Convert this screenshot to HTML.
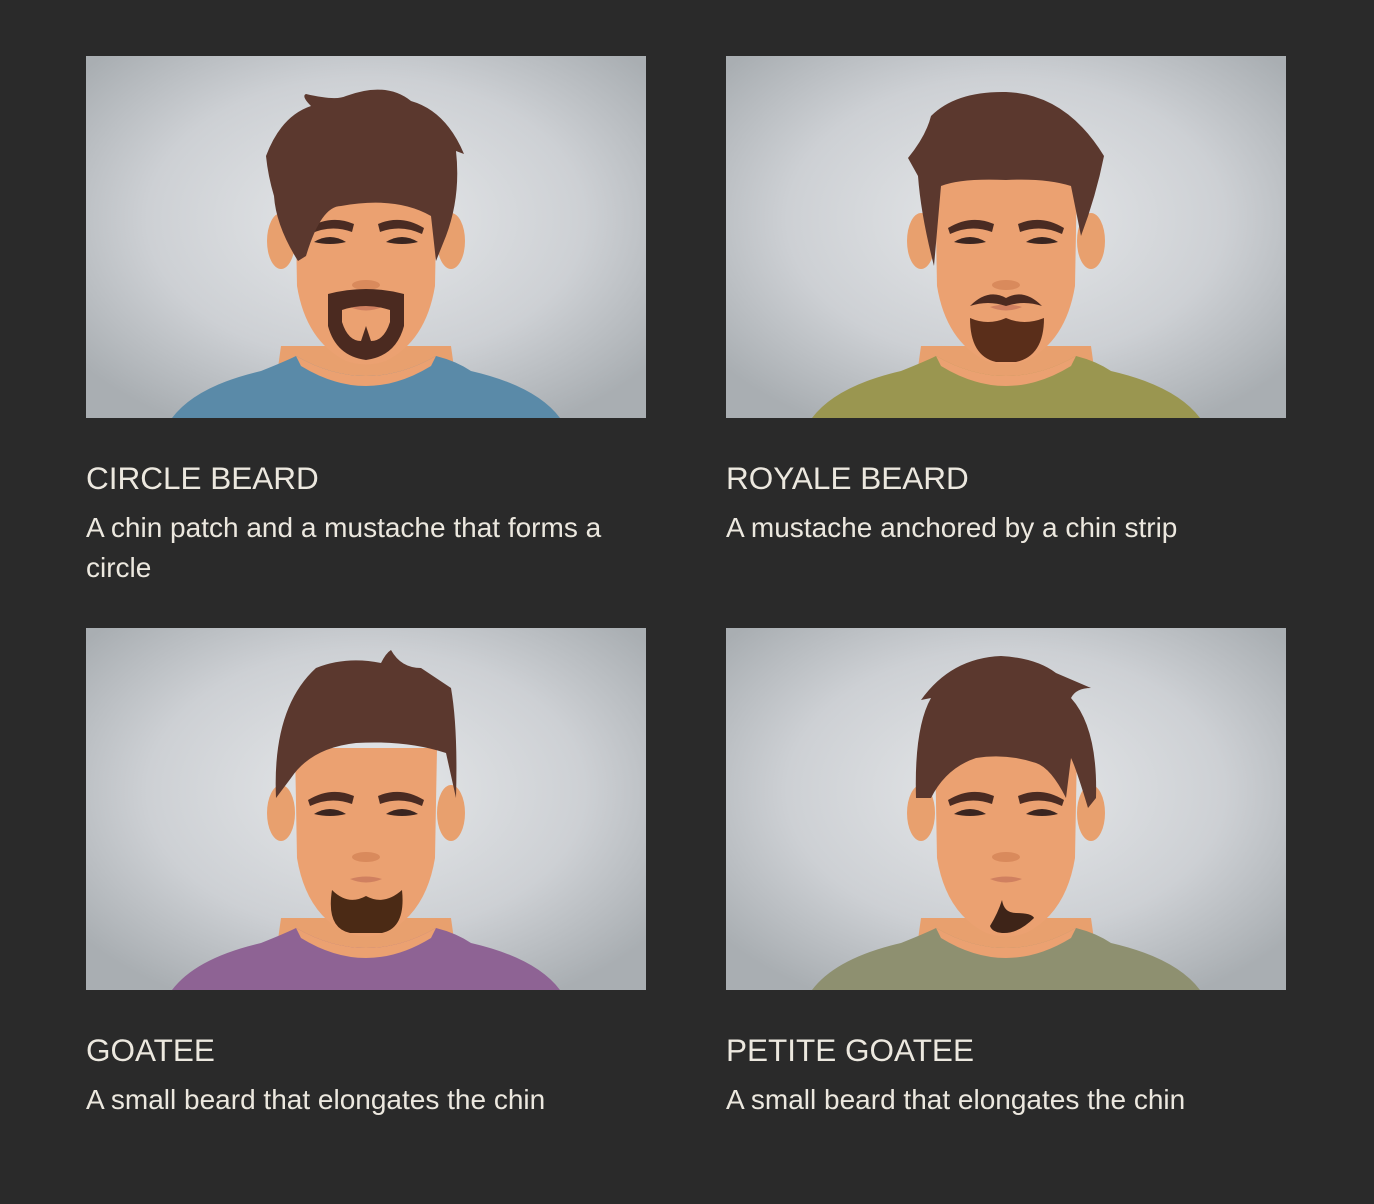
<!DOCTYPE html>
<html><head><meta charset="utf-8"><style>
body{margin:0;background:#2a2a2a;width:1374px;height:1204px;overflow:hidden;font-family:"Liberation Sans",Arial,sans-serif;color:#ece8df}
.card{position:absolute;width:560px}
.card svg{display:block;width:560px;height:362px}
h2{margin:0;position:absolute;font-weight:400;font-size:31.5px;line-height:72px;white-space:nowrap}
p{margin:0;position:absolute;font-size:28px;line-height:40px;width:560px}
</style></head><body>
<svg width="0" height="0" style="position:absolute">
<defs>
<radialGradient id="bg" cx="50%" cy="45%" r="65%"><stop offset="0" stop-color="#e6e8ea"/><stop offset="0.6" stop-color="#cdd0d4"/><stop offset="1" stop-color="#a9aeb2"/></radialGradient>
<g id="base">
<rect width="560" height="362" fill="url(#bg)"/>
<path d="M185 362 L195 290 L365 290 L375 362Z" fill="#e8a06e"/>
<ellipse cx="195" cy="185" rx="14" ry="28" fill="#e8a06e"/>
<ellipse cx="365" cy="185" rx="14" ry="28" fill="#e8a06e"/>
<path d="M209 120 L351 120 L349 230 Q340 285 300 305 Q280 312 260 305 Q220 285 211 230Z" fill="#eba171"/>
<path d="M222 172 Q245 158 268 168 L266 176 Q245 168 224 178Z" fill="#4a2b22"/>
<path d="M338 172 Q315 158 292 168 L294 176 Q315 168 336 178Z" fill="#4a2b22"/>
<path d="M228 186 Q244 176 260 186 Q244 190 228 186Z" fill="#3a2520"/>
<path d="M300 186 Q316 176 332 186 Q316 190 300 186Z" fill="#3a2520"/>
<ellipse cx="280" cy="229" rx="14" ry="5" fill="#d98a5c"/>
<path d="M264 251 Q280 246 296 251 Q280 258 264 251Z" fill="#d08060"/>
</g>
</defs></svg>

<div class="card" style="left:86px;top:56px">
<svg viewBox="0 0 560 362"><use href="#base"/>
<path d="M86 362 Q110 330 175 315 Q200 305 210 300 Q280 340 350 300 Q370 305 385 315 Q450 330 474 362Z" fill="#5a8aa8"/>
<path d="M210 300 Q280 340 350 300 L345 310 Q280 350 215 310Z" fill="#eba171"/>
<path d="M180 100 Q195 60 225 50 Q215 40 220 38 Q250 45 260 40 Q300 25 325 45 Q360 55 378 98 L370 95 Q375 140 360 180 L350 205 L345 160 Q310 140 255 150 Q235 150 220 200 L212 205 Q190 170 188 140 Q182 120 180 100Z" fill="#5b382e"/>
<path d="M242 238 Q280 228 318 238 L318 270 Q310 300 280 304 Q250 300 242 270Z M256 254 L256 266 Q262 285 275 285 L280 270 L285 285 Q298 285 304 266 L304 254 Q280 246 256 254Z" fill="#4b2a20" fill-rule="evenodd"/>
</svg>
<h2 style="left:0;top:386px">CIRCLE BEARD</h2>
<p style="top:452px">A chin patch and a mustache that forms a circle</p>
</div>

<div class="card" style="left:726px;top:56px">
<svg viewBox="0 0 560 362"><use href="#base"/>
<path d="M86 362 Q110 330 175 315 Q200 305 210 300 Q280 340 350 300 Q370 305 385 315 Q450 330 474 362Z" fill="#9a9650"/>
<path d="M210 300 Q280 340 350 300 L345 310 Q280 350 215 310Z" fill="#eba171"/>
<path d="M182 102 Q200 80 205 60 Q230 35 280 36 Q340 38 378 100 Q370 140 355 180 L345 130 Q320 122 280 124 Q235 122 215 130 L208 210 Q195 160 192 120Z" fill="#5b382e"/>
<path d="M244 250 Q262 232 280 242 Q298 232 316 250 Q298 244 280 250 Q262 244 244 250Z" fill="#4b2a20"/>
<path d="M244 262 Q262 270 280 262 Q298 270 318 262 Q318 300 290 306 L270 306 Q244 300 244 262Z" fill="#5a2e1a"/>
</svg>
<h2 style="left:0;top:386px">ROYALE BEARD</h2>
<p style="top:452px">A mustache anchored by a chin strip</p>
</div>

<div class="card" style="left:86px;top:628px">
<svg viewBox="0 0 560 362"><use href="#base"/>
<path d="M86 362 Q110 330 175 315 Q200 305 210 300 Q280 340 350 300 Q370 305 385 315 Q450 330 474 362Z" fill="#8e6394"/>
<path d="M210 300 Q280 340 350 300 L345 310 Q280 350 215 310Z" fill="#eba171"/>
<path d="M190 170 Q186 80 230 40 Q260 28 295 35 Q300 25 305 22 Q315 40 335 40 L365 60 Q372 100 370 170 L360 125 Q320 112 270 115 Q225 120 205 150Z" fill="#5b382e"/>
<path d="M246 262 Q262 278 280 268 Q298 278 316 262 Q320 300 296 305 L264 305 Q240 300 246 262Z" fill="#4b2a15"/>
</svg>
<h2 style="left:0;top:386px">GOATEE</h2>
<p style="top:452px">A small beard that elongates the chin</p>
</div>

<div class="card" style="left:726px;top:628px">
<svg viewBox="0 0 560 362"><use href="#base"/>
<path d="M86 362 Q110 330 175 315 Q200 305 210 300 Q280 340 350 300 Q370 305 385 315 Q450 330 474 362Z" fill="#8e9070"/>
<path d="M210 300 Q280 340 350 300 L345 310 Q280 350 215 310Z" fill="#eba171"/>
<path d="M190 170 Q188 100 205 70 L195 72 Q225 30 275 28 Q310 30 330 45 L365 60 Q350 60 345 70 Q372 100 370 170 L362 180 Q350 140 345 130 L340 170 Q325 140 310 135 Q280 125 250 130 Q220 140 205 170Z" fill="#5b382e"/>
<path d="M264 298 Q272 285 276 272 Q278 285 290 285 Q306 285 308 290 Q292 306 276 305 Q266 304 264 298Z" fill="#3e2418"/>
</svg>
<h2 style="left:0;top:386px">PETITE GOATEE</h2>
<p style="top:452px">A small beard that elongates the chin</p>
</div>
</body></html>
